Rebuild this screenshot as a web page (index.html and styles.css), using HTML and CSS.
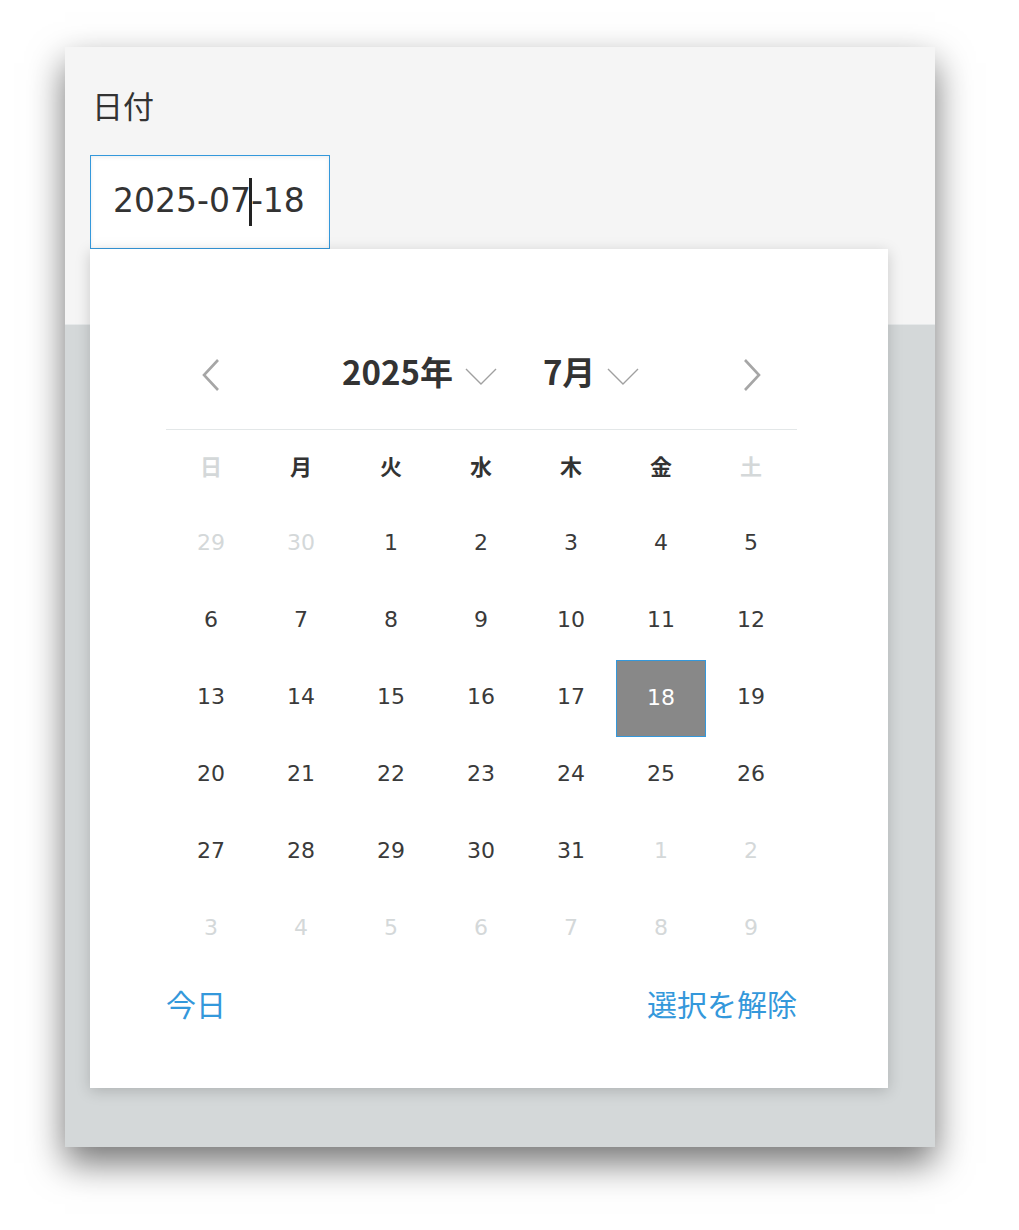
FILE: index.html
```html
<!DOCTYPE html>
<html lang="ja">
<head>
<meta charset="utf-8">
<title>日付</title>
<link rel="stylesheet" href="styles.css">
</head>
<body>
<div class="page">
<div class="frame">
  <div class="head">
    <div class="label">日付</div>
    <div class="date-input">2025-07<span class="caret"></span>-18</div>
  </div>
  <div class="popup">
    <div class="cal-head">
      <div class="nav">
        <svg width="20" height="32" viewBox="0 0 20 32"><path d="M17 1 L3 16 L17 31" fill="none" stroke="#a6a6a6" stroke-width="2.6"/></svg>
      </div>
      <div class="selects">
        <div class="sel year">2025年
          <svg class="chev" width="32" height="18" viewBox="0 0 32 18"><path d="M1 1 L16 16 L31 1" fill="none" stroke="#a0a0a0" stroke-width="1.4"/></svg>
        </div>
        <div class="sel month">7月
          <svg class="chev" width="32" height="18" viewBox="0 0 32 18"><path d="M1 1 L16 16 L31 1" fill="none" stroke="#a0a0a0" stroke-width="1.4"/></svg>
        </div>
      </div>
      <div class="nav">
        <svg width="20" height="32" viewBox="0 0 20 32"><path d="M3 1 L17 16 L3 31" fill="none" stroke="#a6a6a6" stroke-width="2.6"/></svg>
      </div>
    </div>
    <div class="weekdays">
      <div class="wd off">日</div>
      <div class="wd">月</div>
      <div class="wd">火</div>
      <div class="wd">水</div>
      <div class="wd">木</div>
      <div class="wd">金</div>
      <div class="wd off">土</div>
    </div>
    <div class="days">
      <div class="day other">29</div><div class="day other">30</div><div class="day">1</div><div class="day">2</div><div class="day">3</div><div class="day">4</div><div class="day">5</div>
      <div class="day">6</div><div class="day">7</div><div class="day">8</div><div class="day">9</div><div class="day">10</div><div class="day">11</div><div class="day">12</div>
      <div class="day">13</div><div class="day">14</div><div class="day">15</div><div class="day">16</div><div class="day">17</div><div class="day selected">18</div><div class="day">19</div>
      <div class="day">20</div><div class="day">21</div><div class="day">22</div><div class="day">23</div><div class="day">24</div><div class="day">25</div><div class="day">26</div>
      <div class="day">27</div><div class="day">28</div><div class="day">29</div><div class="day">30</div><div class="day">31</div><div class="day other">1</div><div class="day other">2</div>
      <div class="day other">3</div><div class="day other">4</div><div class="day other">5</div><div class="day other">6</div><div class="day other">7</div><div class="day other">8</div><div class="day other">9</div>
    </div>
    <div class="cal-foot">
      <span class="link">今日</span>
      <span class="link">選択を解除</span>
    </div>
  </div>
</div>
</div>
</body>
</html>
```
FILE: styles.css
```css
html, body {
  margin: 0;
  padding: 0;
  background: #ffffff;
}
body {
  font-family: "DejaVu Sans", "Noto Sans CJK JP", sans-serif;
  color: #333333;
}
.page {
  padding: 47px 0 83px 65px;
}
.frame {
  position: relative;
  width: 870px;
  height: 1100px;
  background: #d4d8d9;
  box-shadow: 0 16px 34px rgba(0, 0, 0, 0.55);
}
.head {
  box-sizing: border-box;
  height: 278px;
  background: #f5f5f5;
  border-bottom: 1px solid #e6e9ea;
  padding: 38px 0 0 25px;
}
.label {
  font-family: "Noto Sans CJK JP", sans-serif;
  font-size: 31px;
  line-height: 40px;
  color: #333333;
  padding-left: 2px;
}
.date-input {
  box-sizing: border-box;
  margin-top: 30px;
  width: 240px;
  height: 94px;
  background: #ffffff;
  border: 1px solid #3498db;
  box-shadow: inset 0 1px 4px rgba(0, 0, 0, 0.08);
  display: flex;
  align-items: center;
  padding: 0 0 4px 22px;
  font-family: "DejaVu Sans", sans-serif;
  font-size: 33px;
  color: #333333;
  white-space: nowrap;
}
.caret {
  display: inline-block;
  width: 3px;
  height: 48px;
  background: #222222;
  margin: 4px -1px 0 -2px;
}
.popup {
  position: absolute;
  left: 25px;
  top: 202px;
  width: 798px;
  box-sizing: border-box;
  background: #ffffff;
  padding: 72px 91px 46px 76px;
  box-shadow: 0 3px 14px rgba(0, 0, 0, 0.18);
}
.cal-head {
  height: 108px;
  border-bottom: 1px solid #e3e7e8;
  display: flex;
  align-items: center;
}
.nav {
  width: 90px;
  height: 40px;
  display: flex;
  align-items: center;
  justify-content: center;
}
.selects {
  flex: 1;
  display: flex;
  align-items: center;
  padding-left: 86px;
  padding-bottom: 8px;
  font-family: "Noto Sans CJK JP", sans-serif;
  font-weight: bold;
  font-size: 33px;
  color: #333333;
}
.sel {
  display: flex;
  align-items: center;
}
.chev {
  margin-top: 12px;
  margin-left: 12px;
}
.year {
  margin-right: 46px;
}
.weekdays {
  display: grid;
  grid-template-columns: repeat(7, 90px);
  height: 76px;
}
.wd {
  display: flex;
  align-items: center;
  justify-content: center;
  font-family: "Noto Sans CJK JP", sans-serif;
  font-weight: bold;
  font-size: 22px;
  color: #333333;
  padding-bottom: 6px;
}
.wd.off {
  color: #d4d8d9;
}
.days {
  display: grid;
  grid-template-columns: repeat(7, 90px);
  grid-auto-rows: 77px;
}
.day {
  box-sizing: border-box;
  display: flex;
  align-items: center;
  justify-content: center;
  font-size: 22px;
  color: #3a3a3a;
  padding-bottom: 5px;
}
.day.other {
  color: #d4d8d9;
}
.day.selected {
  background: #888888;
  border: 1px solid #3498db;
  color: #ffffff;
  padding-bottom: 3px;
}
.cal-foot {
  height: 74px;
  display: flex;
  align-items: center;
  justify-content: space-between;
}
.link {
  font-family: "Noto Sans CJK JP", sans-serif;
  font-size: 30px;
  color: #3498db;
  padding-bottom: 4px;
}
```
